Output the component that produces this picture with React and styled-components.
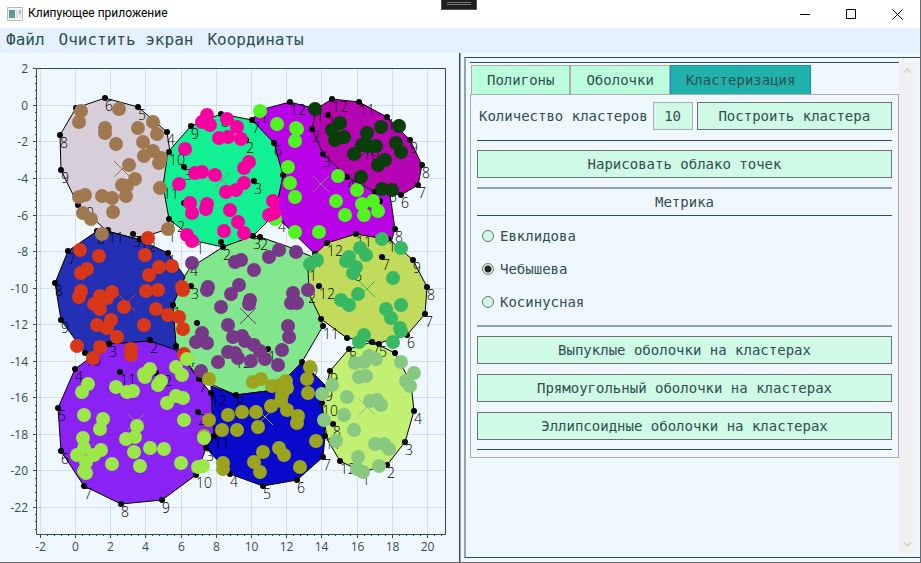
import React, { useState } from "react";
import styled, { createGlobalStyle } from "styled-components";

const ink = "#2f4f4f";
const mint = "#cffae6";
const mono = `"DejaVu Sans Mono", "Liberation Mono", monospace`;
const sans = `"Open Sans", "Noto Sans", sans-serif`;

const GlobalStyle = createGlobalStyle`
  *, *::before, *::after { box-sizing: border-box; }
  body { margin: 0; background: #f0f8ff; }
  button, input { font: inherit; color: inherit; margin: 0; }
`;

const Window = styled.div`
  position: relative;
  display: grid;
  grid-template-rows: 28px 25px minmax(0, 1fr);
  height: 100vh;
  min-height: 520px;
  border-right: 1px solid #6b6b6b;
  border-bottom: 1px solid #6b6b6b;
  background: #f0f8ff;
  color: ${ink};
  font: 14px/20px ${mono};
`;

const TitleBar = styled.header`
  display: flex;
  align-items: center;
  padding-left: 7px;
  background: #fff;
  color: #000;
  font: 12px/16px Roboto, ${sans};
`;

const Title = styled.h1`
  flex: 1;
  margin: 0 0 2px 5px;
  font: inherit;
`;

const CaptionButton = styled.button`
  display: grid;
  place-items: center;
  width: 46px;
  height: 25px;
  padding: 0;
  border: 0;
  background: none;
`;

const DragHandle = styled.div`
  position: absolute;
  top: 0;
  left: 50%;
  width: 36px;
  height: 10px;
  margin-left: -19px;
  padding: 2px 5px;
  border: 1px solid #555;
  border-top: 0;
  background: #1e1e1e;

  &::before {
    content: "";
    display: block;
    height: 3px;
    border: solid #777;
    border-width: 1px 0;
  }
`;

const MenuBar = styled.nav`
  display: flex;
  align-items: center;
  gap: 14px;
  padding-left: 6px;
  background: #e4f1ff;
  font-size: 16px;
`;

const MenuButton = styled.button`
  padding: 0 0 1px;
  border: 0;
  background: none;
`;

const Main = styled.main`
  display: grid;
  grid-template-columns: minmax(0, 1fr) 2px minmax(0, 1fr);
  min-height: 0;
`;

const ChartPane = styled.section`
  min-width: 0;
  min-height: 0;
`;

const Chart = styled.svg`
  display: block;
  width: 100%;
  height: 100%;
  font-family: ${sans};
`;

const Splitter = styled.div`
  border-left: 1px solid ${ink};
  background: #8fa5a8;
`;

const SidePane = styled.section`
  display: flex;
  min-width: 0;
  min-height: 0;
  padding: 4px 0 4px 3px;
`;

const ScrollFrame = styled.div`
  flex: 1;
  display: flex;
  min-width: 0;
  padding: 4px;
  border: solid ${ink};
  border-width: 1px 0;
  border-left: 2px solid #8fa5a8;
`;

const Content = styled.div`
  flex: 1;
  min-width: 0;
  border-top: 1px solid ${ink};
`;

const TabList = styled.div`
  display: flex;
  padding: 2px 0 0 1px;
`;

const Tab = styled.button`
  height: 29px;
  padding: 0 15px;
  border: 1px solid ${(p) => (p.$active ? "#1883d7" : "#acacac")};
  border-bottom: 0;
  background: ${(p) => (p.$active ? "#20b2aa" : "#bcffdc")};
`;

const TabPanel = styled.div`
  display: grid;
  padding: 7px 6px;
  border: 1px solid #acacac;
  background: #f0f8ff;
`;

const CountRow = styled.div`
  display: flex;
  align-items: center;
  gap: 4px;
  margin-bottom: 10px;
`;

const CountLabel = styled.label`
  padding: 0 1px 0 2px;
  white-space: nowrap;
`;

const CountInput = styled.input`
  width: 40px;
  height: 28px;
  padding: 0;
  border: 1px solid #abadb3;
  background: ${mint};
  text-align: center;
`;

const ActionButton = styled.button`
  flex: 1;
  min-width: 0;
  height: 28px;
  padding: 0;
  border: 1px solid #707070;
  background: ${mint};
  white-space: nowrap;
`;

const Rule = styled.hr`
  width: 100%;
  height: ${(p) => (p.$soft ? 2 : 1)}px;
  margin: 0;
  border: 0;
  background: ${(p) => (p.$soft ? "#8fa5a8" : ink)};
`;

const Stack = styled.div`
  display: grid;
  gap: 10px;
  padding: 9px 0;
`;

const Heading = styled.h2`
  margin: 0;
  padding: 3px 0;
  text-align: center;
  font: inherit;
`;

const Metrics = styled.div`
  display: grid;
  gap: 13px;
  padding: 10px 5px 13px;
`;

const Option = styled.label`
  display: flex;
  align-items: center;
  gap: 6px;
`;

const Radio = styled.input`
  appearance: none;
  width: 12px;
  height: 12px;
  border: 1px solid #707070;
  border-radius: 50%;
  background: ${mint};

  &:checked {
    background: radial-gradient(circle, #212121 0 3px, ${mint} 4px);
  }
`;

const ScrollBar = styled.div`
  display: flex;
  flex-direction: column;
  justify-content: space-between;
  width: 17px;
  background: #f0f0f0;
`;

const ScrollButton = styled.button`
  display: grid;
  place-items: center;
  height: 17px;
  padding: 0;
  border: 0;
  background: none;
`;

const polygons = [
  ["#d6ced8", "76,108 105,98 138,107 167,132 174,180 168,229 137,239 107,231 78,205 61,170 60,135"],
  ["#ba02e9", "252,120 260,110 290,102 316,109 375,150 390,195 395,229 390,245 327,250 315,254 279,219 265,160"],
  ["#12f094", "191,126 168,152 163,186 169,219 196,241 223,247 253,236 275,214 283,175 274,143 252,120 221,114"],
  ["#b604b2", "332,99 359,102 387,117 410,140 422,165 418,185 401,195 375,192 347,177 323,154 312,129 316,109"],
  ["#82e68c", "223,247 253,236 260,237 289,247 315,258 321,319 323,326 302,362 275,390 236,395 199,379 176,346 172,305 184,277 190,268"],
  ["#2330b4", "68,251 97,231 107,231 140,240 168,253 185,277 173,305 176,346 188,360 85,353 61,320 55,283"],
  ["#c1dc5c", "327,243 356,234 390,240 413,260 427,287 425,314 407,335 379,343 347,338 321,319 309,294 308,268 315,254"],
  ["#8b22f4", "75,369 109,344 150,341 176,350 199,379 211,393 214,436 206,448 196,475 162,500 121,504 84,486 61,451 58,408"],
  ["#0a0acc", "211,386 236,395 275,390 302,362 326,386 322,403 325,436 323,457 297,480 263,486 230,474 206,448 214,436"],
  ["#c2f072", "372,342 395,353 411,383 414,411 405,442 387,465 362,472 340,461 327,439 322,403 330,371 349,349"],
];

const vertices = [
  [76, 108, ""], [105, 98, "6"], [138, 107, "5"], [167, 132, "4"], [60, 135, "8"], [61, 170, "9"], [78, 205, "10"],
  [97, 231, "6"], [108, 230, "11"], [133, 234, "3"], [140, 239, "12"], [168, 229, "1"],
  [68, 251, "7"], [55, 283, "8"], [61, 320, "9"], [85, 353, "10"], [109, 344, "3"], [150, 340, "2"],
  [168, 253, "1"], [173, 305, "1"], [176, 346, ""],
  [191, 126, "9"], [169, 152, "10"], [163, 186, "11"], [169, 219, "12"], [184, 167, "3"], [184, 203, ""],
  [196, 241, "1"], [221, 242, ""], [223, 247, "2"], [253, 236, "3"], [260, 237, "2"], [278, 219, "4"],
  [283, 175, ""], [274, 143, "6"], [252, 120, "7"], [221, 114, "8"], [246, 140, "2"], [254, 181, "3"],
  [290, 102, "12"], [260, 110, "1"],
  [332, 99, "12"], [359, 102, "11"], [387, 117, "10"], [410, 140, "9"], [422, 165, "8"], [418, 185, "7"],
  [401, 195, "6"], [389, 189, "5"], [375, 192, ""], [347, 177, "4"], [323, 154, "3"], [312, 129, "2"],
  [316, 109, "1"], [328, 115, "1"], [363, 147, "10"], [380, 201, ""],
  [395, 229, "8"], [356, 234, "11"], [327, 243, "12"], [388, 239, "1"], [413, 260, "9"], [427, 287, "8"],
  [425, 314, "7"], [407, 335, "6"], [382, 257, "7"], [319, 286, "12"], [315, 254, "1"], [309, 268, "1"],
  [308, 290, "2"], [354, 268, "6"], [321, 319, ""], [323, 326, "11"], [347, 338, ""],
  [372, 342, "7"], [379, 344, "5"], [349, 349, "8"], [330, 371, "9"], [302, 362, "10"],
  [395, 353, ""], [414, 411, "4"], [405, 442, "3"], [387, 465, "2"], [362, 472, "1"], [340, 461, "12"],
  [325, 436, "11"], [333, 424, "8"], [322, 403, "10"], [325, 388, "9"],
  [323, 457, "7"], [297, 480, "6"], [263, 486, "5"], [230, 474, "4"], [206, 448, "3"], [214, 436, "11"],
  [198, 412, "2"], [211, 393, "12"], [236, 395, "8"], [199, 379, "7"],
  [190, 263, "4"], [191, 286, "3"], [197, 323, ""], [268, 349, "1"], [235, 355, "12"], [187, 354, "4"],
  [120, 372, "11"], [156, 373, "12"],
  [75, 369, "4"], [58, 408, "5"], [61, 451, "6"], [84, 486, "7"], [121, 504, "8"], [162, 500, "9"], [196, 475, "10"],
];

const clusters = [
  { color: "#a07850", center: [122, 169], points: "81,111 79,122 119,109 153,122 157,134 138,128 105,128 105,133 143,142 116,144 153,151 144,156 161,158 159,163 129,165 135,179 122,185 127,186 126,196 160,188 102,196 112,198 85,195 79,197 83,213 91,219 113,212 102,234 168,229" },
  { color: "#50f520", center: [321, 184], cross: "#808c70", points: "260,111 277,124 296,128 297,129 295,141 288,167 290,183 295,197 275,219 295,232 338,176 357,190 336,201 362,204 373,201 378,211 345,215 364,215 319,232" },
  { color: "#f800a0", center: [222, 180], cross: "#909080", points: "207,115 202,122 210,125 227,119 237,127 219,138 228,137 241,139 185,149 195,173 202,172 215,175 249,162 244,168 179,184 244,183 236,190 226,192 190,203 192,213 207,204 206,209 230,210 238,222 273,201 269,215 274,213 224,231 244,233 187,235 192,241" },
  { color: "#083e08", center: [368, 149], points: "315,109 340,123 332,130 335,140 344,137 367,133 381,127 399,126 362,145 368,146 376,146 396,143 401,152 354,154 385,160 378,165 361,177 382,189 392,190" },
  { color: "#d83818", center: [127, 303], points: "148,238 80,250 99,256 145,255 87,269 81,273 159,267 172,266 149,275 81,291 79,297 158,290 146,291 112,292 100,296 107,298 94,304 100,309 182,287 183,290 124,307 156,309 168,315 179,317 111,320 97,325 107,328 144,325 183,329 117,337 77,346 100,347 93,358 131,349 131,355 184,354" },
  { color: "#783888", center: [248, 316], points: "192,263 241,260 235,262 254,270 279,250 269,257 296,252 239,285 231,294 208,287 207,290 250,300 249,304 221,307 308,290 293,293 291,303 297,303 228,325 202,333 196,342 207,343 288,326 289,337 233,337 242,336 245,341 254,345 260,351 265,359 282,350 278,365 228,352 235,353 238,358 251,361 218,362 201,371" },
  { color: "#38b862", center: [367, 289], points: "382,239 401,248 360,248 366,255 349,257 346,261 356,267 353,273 317,260 310,264 393,278 358,294 341,300 349,305 386,309 401,305 391,318 400,328 401,331 364,335 359,342 393,342" },
  { color: "#9aa41c", center: [265, 417], points: "209,379 253,382 261,379 272,386 280,385 286,381 287,388 282,395 281,401 271,406 287,410 242,412 228,415 256,412 298,416 297,423 209,420 204,436 222,430 237,430 258,427 310,367 307,379 308,393 316,441 279,448 284,455 263,452 254,462 260,472 300,467 223,463 223,469" },
  { color: "#9ae848", center: [136, 422], cross: "#9080a0", points: "187,359 176,367 182,375 150,369 144,374 145,377 161,381 158,385 88,384 82,392 116,387 127,392 133,391 84,415 103,419 100,429 83,438 176,396 167,403 183,398 184,420 137,426 126,439 135,437 134,452 150,448 164,449 204,438 101,450 77,455 84,448 94,455 86,462 84,471 86,473 112,464 140,466 181,463 198,467 203,466" },
  { color: "#88c880", center: [367, 407], points: "369,356 355,363 364,362 376,359 359,377 366,376 401,362 414,373 406,381 410,386 332,385 347,397 322,394 370,401 377,400 381,405 344,415 324,420 354,430 336,441 375,444 384,444 389,449 358,457 379,466 357,469 363,472" },
];

const range = (from, to) => Array.from({ length: to - from + 1 }, (_, i) => from + i);
const toX = (v) => Math.round(75 + v * 17.6) + 0.5;
const toY = (v) => Math.round(104.9 - v * 18.27) + 0.5;

function Axes() {
  const xs = range(-1, 10).map((i) => i * 2);
  const ys = range(-11, 1).map((i) => i * 2);
  return (
    <g>
      <g stroke="#708090" strokeOpacity="0.2">
        {xs.map((v) => <line key={v} x1={toX(v)} x2={toX(v)} y1="68" y2="534" />)}
        {ys.map((v) => <line key={v} x1="37" x2="445" y1={toY(v)} y2={toY(v)} />)}
      </g>
      <g stroke={ink}>
        {range(-5, 52).map((i) => <line key={i} x1={toX(i * 0.4)} x2={toX(i * 0.4)} y1="534" y2={i % 5 ? 536 : 538} />)}
        {range(-58, 5).map((i) => <line key={i} x1={i % 5 ? 35 : 33} x2="37" y1={toY(i * 0.4)} y2={toY(i * 0.4)} />)}
        <path d="M36.5 534.5V68.5H445.5V534.5Z" fill="none" />
      </g>
      <g fill={ink} fontSize="12">
        {xs.map((v) => <text key={v} x={toX(v)} y="551" textAnchor="middle">{v}</text>)}
        {ys.map((v) => <text key={v} x="28" y={toY(v) + 4} textAnchor="end">{v}</text>)}
      </g>
    </g>
  );
}

function Plot() {
  return (
    <Chart viewBox="0 53 459 509" preserveAspectRatio="xMinYMin meet" role="img" aria-label="Кластеры">
      <Axes />
      {polygons.map(([fill, points]) => (
        <polygon key={fill} points={points} fill={fill} stroke="#000" />
      ))}
      {vertices.map(([x, y, label], i) => (
        <g key={i}>
          <circle cx={x} cy={y} r="3" />
          {label && <text x={x} y={y + 13} fontSize="14" fontWeight="300">{label}</text>}
        </g>
      ))}
      {clusters.map(({ color, cross, center: [x, y], points }) => (
        <g key={color} fill={color}>
          <path d={`M${x - 8} ${y - 8}l16 16m0-16l-16 16`} stroke={cross || color} />
          {points.split(" ").map((p) => {
            const [cx, cy] = p.split(",");
            return <circle key={p} cx={cx} cy={cy} r="7" />;
          })}
        </g>
      ))}
    </Chart>
  );
}

function AppIcon() {
  return (
    <svg width="16" height="14" viewBox="0 0 16 14" aria-hidden="true">
      <defs>
        <linearGradient id="screen" x2="0.6" y2="1">
          <stop stopColor="#5187b5" />
          <stop offset="1" stopColor="#55a886" />
        </linearGradient>
      </defs>
      <path fill="#f6f6f6" stroke="#b5bcc2" d="M.5.5h15v13H.5z" />
      <path fill="url(#screen)" d="M2 3h6v8H2z" />
      <path fill="#dcdcdc" d="M9 3h2v8H9z" />
      <path fill="#8fc1ae" d="M12 3h2v4h-2z" />
      <path fill="#dde2e4" d="M12 7h2v4h-2z" />
    </svg>
  );
}

const CaptionIcon = ({ d }) => (
  <svg width="11" height="11" viewBox="0 0 11 11" fill="none" stroke="#000" aria-hidden="true">
    <path d={d} />
  </svg>
);

const ScrollIcon = ({ d }) => (
  <svg width="9" height="7" viewBox="0 0 9 7" fill="none" stroke="#cfcfcf" strokeWidth="1.5" aria-hidden="true">
    <path d={d} />
  </svg>
);

const tabs = ["Полигоны", "Оболочки", "Кластеризация"];
const metrics = ["Евклидова", "Чебышева", "Косинусная"];
const hulls = ["Выпуклые", "Прямоугольный", "Эллипсоидные"];

export default function App() {
  const [tab, setTab] = useState("Кластеризация");
  const [metric, setMetric] = useState("Чебышева");
  const [count, setCount] = useState("10");

  return (
    <>
      <GlobalStyle />
      <Window>
        <TitleBar>
          <AppIcon />
          <Title>Клипующее приложение</Title>
          <CaptionButton aria-label="Свернуть"><CaptionIcon d="M0 5.5h10" /></CaptionButton>
          <CaptionButton aria-label="Развернуть"><CaptionIcon d="M.5.5h9v9h-9z" /></CaptionButton>
          <CaptionButton aria-label="Закрыть"><CaptionIcon d="M.5.5l10 10m0-10l-10 10" /></CaptionButton>
        </TitleBar>
        <MenuBar>
          <MenuButton>Файл</MenuButton>
          <MenuButton>Очистить экран</MenuButton>
          <MenuButton>Координаты</MenuButton>
        </MenuBar>
        <Main>
          <ChartPane><Plot /></ChartPane>
          <Splitter />
          <SidePane>
            <ScrollFrame>
              <Content>
                <TabList role="tablist">
                  {tabs.map((t) => (
                    <Tab key={t} role="tab" aria-selected={t === tab} $active={t === tab} onClick={() => setTab(t)}>
                      {t}
                    </Tab>
                  ))}
                </TabList>
                <TabPanel role="tabpanel">
                  <CountRow>
                    <CountLabel htmlFor="count">Количество кластеров</CountLabel>
                    <CountInput id="count" value={count} onChange={(e) => setCount(e.target.value)} />
                    <ActionButton>Построить кластера</ActionButton>
                  </CountRow>
                  <Rule />
                  <Stack>
                    <ActionButton>Нарисовать облако точек</ActionButton>
                  </Stack>
                  <Rule $soft />
                  <Heading id="metric">Метрика</Heading>
                  <Rule />
                  <Metrics role="radiogroup" aria-labelledby="metric">
                    {metrics.map((m) => (
                      <Option key={m}>
                        <Radio type="radio" name="metric" checked={m === metric} onChange={() => setMetric(m)} />
                        {m}
                      </Option>
                    ))}
                  </Metrics>
                  <Rule $soft />
                  <Stack>
                    {hulls.map((h) => <ActionButton key={h}>{h} оболочки на кластерах</ActionButton>)}
                  </Stack>
                  <Rule />
                </TabPanel>
              </Content>
              <ScrollBar>
                <ScrollButton aria-label="Вверх"><ScrollIcon d="M1 5.5L4.5 2 8 5.5" /></ScrollButton>
                <ScrollButton aria-label="Вниз"><ScrollIcon d="M1 1.5L4.5 5 8 1.5" /></ScrollButton>
              </ScrollBar>
            </ScrollFrame>
          </SidePane>
        </Main>
        <DragHandle />
      </Window>
    </>
  );
}
